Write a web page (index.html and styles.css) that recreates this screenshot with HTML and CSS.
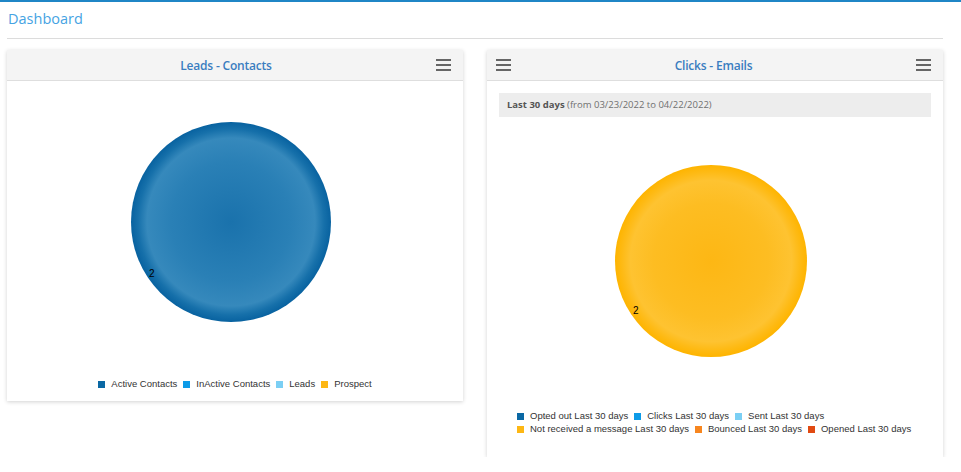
FILE: index.html
```html
<!DOCTYPE html>
<html>
<head>
<meta charset="utf-8">
<link rel="stylesheet" href="styles.css">
</head>
<body>
<div class="page">
  <div class="title-bar"><h1 class="title">Dashboard</h1></div>
  <div class="grid">
    <section class="panel">
      <header class="panel-head">
        <h2 class="panel-title">Leads - Contacts</h2>
        <span class="slot"><span class="burger"><i></i><i></i><i></i></span></span>
      </header>
      <div class="panel-body">
        <svg class="chart chart-left" width="456" height="292" viewBox="0 0 456 292">
          <defs>
            <radialGradient id="gBlue" cx="224" cy="141" r="100" gradientUnits="userSpaceOnUse">
              <stop offset="0" stop-color="#1a72ac"/>
              <stop offset="0.6" stop-color="#2a80b6"/>
              <stop offset="0.84" stop-color="#3689bc"/>
              <stop offset="0.93" stop-color="#1670aa"/>
              <stop offset="1" stop-color="#0862a0"/>
            </radialGradient>
          </defs>
          <circle cx="224" cy="141" r="100" fill="url(#gBlue)"/>
          <text x="142" y="196" class="pie-label">2</text>
        </svg>
        <div class="legend">
          <span class="item"><b class="sw c-dblue"></b>Active Contacts</span>
          <span class="item"><b class="sw c-blue"></b>InActive Contacts</span>
          <span class="item"><b class="sw c-lblue"></b>Leads</span>
          <span class="item"><b class="sw c-yellow"></b>Prospect</span>
        </div>
      </div>
    </section>
    <section class="panel">
      <header class="panel-head">
        <span class="slot"><span class="burger"><i></i><i></i><i></i></span></span>
        <h2 class="panel-title">Clicks - Emails</h2>
        <span class="slot"><span class="burger"><i></i><i></i><i></i></span></span>
      </header>
      <div class="panel-body">
        <div class="range"><strong>Last 30 days</strong> (from 03/23/2022 to 04/22/2022)</div>
        <svg class="chart chart-right" width="456" height="292" viewBox="0 0 456 292">
          <defs>
            <radialGradient id="gYellow" cx="224" cy="144" r="96" gradientUnits="userSpaceOnUse">
              <stop offset="0" stop-color="#fdb714"/>
              <stop offset="0.6" stop-color="#fdbd22"/>
              <stop offset="0.84" stop-color="#fec331"/>
              <stop offset="0.93" stop-color="#feba14"/>
              <stop offset="1" stop-color="#feb400"/>
            </radialGradient>
          </defs>
          <circle cx="224" cy="144" r="96" fill="url(#gYellow)"/>
          <text x="146" y="197" class="pie-label">2</text>
        </svg>
        <div class="legend legend-wide">
          <div class="row">
            <span class="item"><b class="sw c-dblue"></b>Opted out Last 30 days</span>
            <span class="item"><b class="sw c-blue"></b>Clicks Last 30 days</span>
            <span class="item"><b class="sw c-lblue"></b>Sent Last 30 days</span>
          </div>
          <div class="row">
            <span class="item"><b class="sw c-yellow"></b>Not received a message Last 30 days</span>
            <span class="item"><b class="sw c-orange"></b>Bounced Last 30 days</span>
            <span class="item"><b class="sw c-red"></b>Opened Last 30 days</span>
          </div>
        </div>
      </div>
    </section>
  </div>
</div>
</body>
</html>
```
FILE: styles.css
```css
* { box-sizing: border-box; }
html, body { margin: 0; padding: 0; background: #fff; }
body {
  border-top: 2px solid #1f86c6;
  font-family: "Open Sans", "Liberation Sans", sans-serif;
}
.page { padding: 0 18px 0 7px; }
.title-bar {
  height: 37px;
  border-bottom: 1px solid #dcdcdc;
  padding: 7px 0 0 1px;
}
.title {
  margin: 0;
  font-size: 14.5px;
  font-weight: 400;
  color: #45a3e3;
  line-height: 20px;
}
.grid {
  display: grid;
  grid-template-columns: 456px 456px;
  column-gap: 24px;
  align-items: start;
  margin-top: 11px;
}
.panel {
  background: #fff;
  box-shadow: 0 1px 4px rgba(0,0,0,0.18);
}
.panel-head {
  height: 31px;
  background: #f4f4f4;
  border-bottom: 1px solid #dedede;
  display: flex;
  align-items: center;
  padding: 0 12px 0 9px;
}
.slot { width: 15px; display: flex; }
.panel-title {
  flex: 1;
  margin: 0;
  text-align: center;
  font-size: 12px;
  font-weight: 600;
  color: #3a7dc0;
  letter-spacing: -0.2px;
}
.burger {
  display: flex;
  flex-direction: column;
  gap: 2.5px;
  width: 15px;
}
.burger i {
  display: block;
  height: 2.5px;
  background: #666;
}
.panel-body { display: flex; flex-direction: column; }
.chart { display: block; }
.pie-label { font-family: "Liberation Sans", Arial, sans-serif; font-size: 10px; fill: #000; }
.range {
  margin: 12px 12px 0 12px;
  height: 24px;
  background: #ededed;
  padding: 0 8px;
  font-size: 9.5px;
  line-height: 24px;
  color: #707070;
}
.range strong { color: #555; font-weight: 700; }
.legend {
  font-family: "Liberation Sans", Arial, sans-serif;
  font-size: 9.5px;
  color: #333;
  line-height: 12px;
  padding: 5px 0 11px;
  text-align: center;
  display: flex;
  justify-content: center;
  gap: 6px;
}
.legend-wide {
  flex-direction: column;
  align-items: flex-start;
  gap: 1px;
  padding: 1px 0 22px 30px;
  line-height: 12px;
}
.row { display: flex; gap: 6px; }
.item { display: inline-flex; align-items: center; white-space: nowrap; }
.sw { width: 7px; height: 7px; margin-right: 6px; display: inline-block; }
.c-dblue { background: #0a68a4; }
.c-blue { background: #0d9be8; }
.c-lblue { background: #7bcff4; }
.c-yellow { background: #fdb714; }
.c-orange { background: #f7861f; }
.c-red { background: #e14a12; }
```
